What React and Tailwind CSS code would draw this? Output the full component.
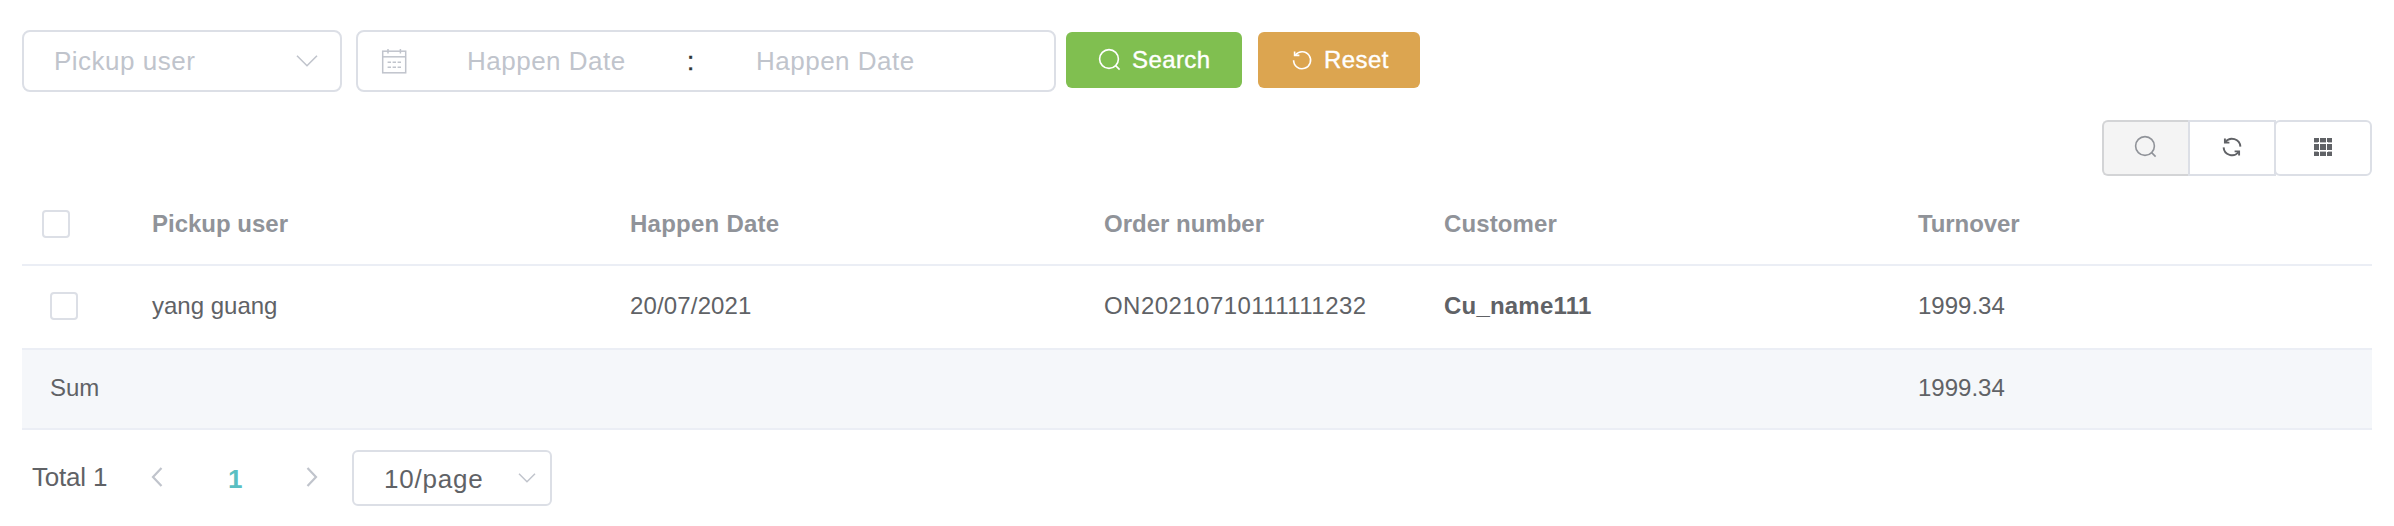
const placeholder = "text-[26px] leading-[30px] tracking-[0.5px] text-[#c0c4cc] whitespace-nowrap";

function SearchIcon({ className }) {
  return (
    <svg viewBox="0 0 24 24" className={className} fill="none" stroke="currentColor" strokeWidth="1.6">
      <circle cx="11" cy="11" r="9.4" />
      <path d="M17.6 17.6 L21.6 21.6" />
    </svg>
  );
}

function ResetIcon({ className }) {
  return (
    <svg viewBox="0 0 24 24" className={className} fill="none" stroke="currentColor" strokeWidth="1.6">
      <path d="M3.6 12.2 A8.5 8.5 0 1 0 5.4 7" />
      <path d="M4.6 3.4 V7.4 H9.4" />
    </svg>
  );
}

function RefreshIcon({ className }) {
  return (
    <svg viewBox="0 0 24 24" className={className} fill="none" stroke="currentColor" strokeWidth="1.9">
      <path d="M20.4 11.6 A8.4 8.4 0 0 0 5.4 7" />
      <path d="M4.9 3.6 V7.6 H9.4" />
      <path d="M3.6 12.4 A8.4 8.4 0 0 0 18.6 17" />
      <path d="M19.1 20.4 V16.4 H14.6" />
    </svg>
  );
}

function GridIcon({ className }) {
  return (
    <svg viewBox="0 0 18 18" className={className} fill="currentColor">
      {[[0, 5], [6, 6], [13, 5]].map(([y, h]) =>
        [[0, 5], [6, 6], [13, 5]].map(([x, w]) => (
          <rect key={`${x}-${y}`} x={x} y={y === 13 ? 14 : y} width={w} height={y === 6 ? 6 : h - 1} />
        ))
      )}
      <path d="M0 4h4v1H0z M6 4h6v1H6z M14 4h4v1h-4z M0 13h4v1H0z M6 13h6v1H6z M14 13h4v1h-4z" opacity=".4" />
    </svg>
  );
}

function CalendarIcon({ className }) {
  return (
    <svg viewBox="0 0 26 26" className={className} fill="none" stroke="currentColor" strokeWidth="1.5">
      <rect x="1.7" y="3.2" width="23" height="21.6" />
      <path d="M1.7 8.8 H24.7" />
      <path d="M7 1 V5.6 M19.4 1 V5.6" />
      <path d="M6.6 14.2 H10 M11.6 14.2 H15 M16.6 14.2 H20 M6.6 19.3 H10 M11.6 19.3 H15 M16.6 19.3 H20" />
    </svg>
  );
}

function Chevron({ className, d, box }) {
  return (
    <svg viewBox={box} className={className} fill="none" stroke="currentColor">
      <path d={d} />
    </svg>
  );
}

function Checkbox({ className }) {
  return <span role="checkbox" aria-checked="false" className={`block size-7 rounded-[4px] border-2 border-[#dcdfe6] bg-white ${className}`} />;
}

const columns = "grid grid-cols-[130px_478px_474px_340px_474px_454px] items-center";

export default function App() {
  return (
    <main className="h-[526px] w-[2394px] overflow-hidden bg-white px-[22px] pt-[30px] font-['Liberation_Sans',Arial,sans-serif] text-[#606266]">
      <form className="flex h-[62px] items-start">
        <div className="flex h-[62px] w-[320px] items-center justify-between rounded-[8px] border-2 border-[#dcdfe6] pl-[30px] pr-[22px]">
          <span className={placeholder}>Pickup user</span>
          <Chevron className="-mt-px h-3 w-[22px] stroke-[1.6] text-[#c0c4cc]" box="0 0 22 12" d="M1 .7 L11 10.7 L21 .7" />
        </div>
        <div className="ml-[14px] flex h-[62px] w-[700px] items-center rounded-[8px] border-2 border-[#dcdfe6] pl-[23px]">
          <CalendarIcon className="size-[26px] text-[#c0c4cc]" />
          <span className={`ml-[60px] w-[220px] ${placeholder}`}>Happen Date</span>
          <span className="w-[69px] text-[26px] leading-[30px] text-[#303133] [-webkit-text-stroke:0.4px_#303133]">:</span>
          <span className={placeholder}>Happen Date</span>
        </div>
        <button type="button" className="ml-[10px] mt-[2px] flex h-14 w-[176px] items-center rounded-[6px] bg-[#80bf50] pl-8 text-2xl leading-7 tracking-[0.4px] text-white">
          <SearchIcon className="size-6 -mt-px" />
          <span className="ml-[10px] [-webkit-text-stroke:0.4px_white]">Search</span>
        </button>
        <button type="button" className="ml-4 mt-[2px] flex h-14 w-[162px] items-center rounded-[6px] bg-[#dca550] pl-8 text-2xl leading-7 tracking-[0.4px] text-white">
          <ResetIcon className="size-6 -mt-px" />
          <span className="ml-[10px] [-webkit-text-stroke:0.4px_white]">Reset</span>
        </button>
      </form>

      <div className="mt-7 flex h-14 justify-end">
        <button type="button" className="flex w-[86px] items-center justify-center rounded-l-[6px] border-2 border-r-0 border-[#d3d4d6] bg-[#f4f4f4] pb-0.5 text-[#909399]">
          <SearchIcon className="size-6" />
        </button>
        <button type="button" className="flex w-[88px] items-center justify-center border-2 border-[#dcdfe6] bg-white pb-0.5">
          <RefreshIcon className="size-6" />
        </button>
        <button type="button" className="-ml-0.5 flex w-[98px] items-center justify-center rounded-[6px] border-2 border-[#dcdfe6] bg-white pb-0.5">
          <GridIcon className="size-[18px]" />
        </button>
      </div>

      <section className="mt-2 text-2xl leading-7">
        <div className={`${columns} h-[82px] border-b-2 border-[#ebeef5] font-bold text-[#909399]`}>
          <Checkbox className="ml-5" />
          <span>Pickup user</span>
          <span className="tracking-[0.25px]">Happen Date</span>
          <span>Order number</span>
          <span className="tracking-[0.1px]">Customer</span>
          <span className="-tracking-[0.1px]">Turnover</span>
        </div>
        <div className={`${columns} h-[84px] border-b-2 border-[#ebeef5] pb-0.5`}>
          <Checkbox className="ml-7" />
          <span>yang guang</span>
          <span className="tracking-[0.15px]">20/07/2021</span>
          <span className="tracking-[0.45px]">ON20210710111111232</span>
          <span className="font-bold tracking-[0.2px]">Cu_name111</span>
          <span>1999.34</span>
        </div>
        <div className={`${columns} h-20 border-b-2 border-[#ebeef5] bg-[#f5f7fa] pb-0.5`}>
          <span className="col-span-5 pl-7">Sum</span>
          <span>1999.34</span>
        </div>
      </section>

      <nav className="mt-5 flex h-14 items-center pl-[10px] text-[26px] leading-[30px]">
        <span className="w-[119px] pb-0.5 -tracking-[0.2px]">Total 1</span>
        <Chevron className="-mt-0.5 h-5 w-3 stroke-[2.2] text-[#c0c4cc]" box="0 0 12 20" d="M10.5 1 L2 10 L10.5 19" />
        <span className="ml-[65px] w-[78px] pt-[2px] font-bold text-[#5abfc2]">1</span>
        <Chevron className="-mt-0.5 h-5 w-3 stroke-[2.2] text-[#c0c4cc]" box="0 0 12 20" d="M1.5 1 L10 10 L1.5 19" />
        <div className="ml-[34px] flex h-14 w-[200px] items-center justify-between rounded-[6px] border-2 border-[#dcdfe6] pl-[30px] pr-[14px]">
          <span className="pt-[2px] tracking-[0.8px]">10/page</span>
          <Chevron className="h-[10px] w-[18px] stroke-[1.5] text-[#c0c4cc]" box="0 0 18 10" d="M1 .7 L9 8.7 L17 .7" />
        </div>
      </nav>
    </main>
  );
}
